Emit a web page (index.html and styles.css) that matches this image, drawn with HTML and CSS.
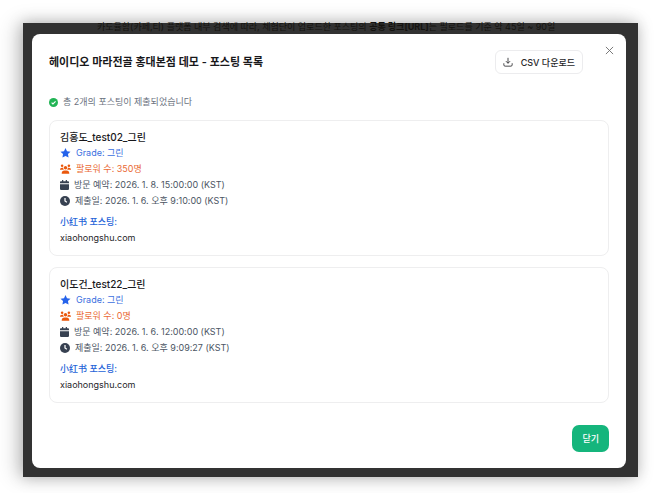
FILE: index.html
```html
<!DOCTYPE html>
<html lang="ko">
<head>
    <meta charset="UTF-8">
    <meta name="viewport" content="width=device-width, initial-scale=1.0">
    <title>포스팅 목록</title>
    <link rel="stylesheet" href="styles.css">
</head>
<body>
    <!-- Shared icons -->
    <svg class="icon-defs" aria-hidden="true">
        <symbol id="icon-star" viewBox="0 0 24 24">
            <path d="M12 0l3.600 7.600 8.400 1.200-6.100 5.800 1.500 8.400L12 19l-7.400 4 1.500-8.400L0 8.800l8.400-1.200z"/>
        </symbol>
        <symbol id="icon-users" viewBox="0 0 26 22">
            <circle cx="5" cy="3.500" r="3"/>
            <circle cx="21" cy="3.500" r="3"/>
            <circle cx="13" cy="8" r="4"/>
            <path d="M0 13c0-3 2-5 5-5h2.500c0 2 .5 3 1.500 5zM26 13c0-3-2-5-5-5h-2.500c0 2-.5 3-1.500 5zM4 22c0-4.500 2.500-7.500 6.500-7.500h5c4 0 6.500 3 6.500 7.500z"/>
        </symbol>
        <symbol id="icon-calendar" viewBox="0 0 22 24">
            <path d="M5 0h3v3h6V0h3v3h3a2 2 0 0 1 2 2v3H0V5a2 2 0 0 1 2-2h3zM0 10h22v12a2 2 0 0 1-2 2H2a2 2 0 0 1-2-2z"/>
        </symbol>
        <symbol id="icon-clock" viewBox="0 0 24 24">
            <circle cx="12" cy="12" r="12"/>
            <path class="icon-line" d="M12 5v7l4.500 3"/>
        </symbol>
    </svg>

    <div class="screen">
        <p class="backdrop-text">카도율함(카페,티) 플랫폼 내부 검색에 따라, 체험단이 업로드한 포스팅의 <b>공통 링크[URL]</b>는 필로드를 기준 약 45일 ~ 90일</p>

        <!-- Posting list modal -->
        <div class="modal" role="dialog" aria-labelledby="modalTitle">
            <button class="close" type="button" aria-label="닫기">
                <svg viewBox="0 0 10 10"><path d="M1 1l8 8M9 1L1 9"/></svg>
            </button>

            <header class="modal-header">
                <h1 id="modalTitle">헤이디오 마라전골 홍대본점 데모 - 포스팅 목록</h1>
                <button class="csv-button" type="button">
                    <svg viewBox="0 0 12 12"><path d="M6 1v6.500M3.500 5L6 7.500 8.500 5M1 7.500v2A1.500 1.500 0 0 0 2.500 11h7A1.500 1.500 0 0 0 11 9.500v-2"/></svg>
                    CSV 다운로드
                </button>
            </header>

            <p class="summary">
                <svg viewBox="0 0 24 24"><circle cx="12" cy="12" r="12"/><path d="M7 12.500l3.500 3.500L17.500 9"/></svg>
                총 2개의 포스팅이 제출되었습니다
            </p>

            <article class="card">
                <h2>김홍도_test02_그린</h2>
                <p class="row grade"><svg class="icon-wide"><use href="#icon-star"/></svg>Grade: 그린</p>
                <p class="row followers"><svg class="icon-wide"><use href="#icon-users"/></svg>팔로워 수: 350명</p>
                <p class="row"><svg class="icon-narrow"><use href="#icon-calendar"/></svg>방문 예약: 2026. 1. 8. 15:00:00 (KST)</p>
                <p class="row"><svg><use href="#icon-clock"/></svg>제출일: 2026. 1. 6. 오후 9:10:00 (KST)</p>
                <h3>小红书 포스팅:</h3>
                <a href="#">xiaohongshu.com</a>
            </article>

            <article class="card">
                <h2>이도건_test22_그린</h2>
                <p class="row grade"><svg class="icon-wide"><use href="#icon-star"/></svg>Grade: 그린</p>
                <p class="row followers"><svg class="icon-wide"><use href="#icon-users"/></svg>팔로워 수: 0명</p>
                <p class="row"><svg class="icon-narrow"><use href="#icon-calendar"/></svg>방문 예약: 2026. 1. 6. 12:00:00 (KST)</p>
                <p class="row"><svg><use href="#icon-clock"/></svg>제출일: 2026. 1. 6. 오후 9:09:27 (KST)</p>
                <h3>小红书 포스팅:</h3>
                <a href="#">xiaohongshu.com</a>
            </article>

            <footer class="modal-footer">
                <button class="done-button" type="button">닫기</button>
            </footer>
        </div>
    </div>
</body>
</html>
```

FILE: styles.css
```css
* {
    box-sizing: border-box;
}

body {
    margin: 0;
    padding: 23px 20px 16px 23px;
    background-color: #fff;
    font-family: Inter, "Noto Sans CJK KR", sans-serif;
    font-size: 9px;
    color: #4b5563;
    overflow-x: hidden;
}

h1, h2, h3, p {
    margin: 0;
}

button {
    font: inherit;
    cursor: pointer;
}

.icon-defs {
    display: none;
}

/* Dimmed page behind the modal */
.screen {
    position: relative;
    padding: 11px 12px 9px 9px;
    background-color: #323232;
    box-shadow: -8px 0 20px rgba(0, 0, 0, 0.14), 0 0 14px rgba(0, 0, 0, 0.25);
}

.backdrop-text {
    position: absolute;
    top: 0;
    left: 74px;
    line-height: 7px;
    white-space: nowrap;
    color: #14120f;
}

/* Modal */
.modal {
    position: relative;
    padding: 16px 17px;
    border-radius: 8px;
    background-color: #fff;
}

.close {
    position: absolute;
    top: 11px;
    right: 11px;
    padding: 1px;
    border: none;
    background: none;
    line-height: 0;
}

.close svg {
    width: 9px;
    height: 9px;
    fill: none;
    stroke: #6b6b6b;
}

.modal-header {
    display: flex;
    justify-content: space-between;
    align-items: center;
    padding-right: 26px;
}

.modal-header h1 {
    font-size: 11px;
    line-height: 16px;
    font-weight: 600;
    color: #18181b;
}

.csv-button {
    display: flex;
    align-items: center;
    gap: 8px;
    height: 24px;
    padding: 0 7px;
    border: 1px solid #ececee;
    border-radius: 6px;
    background-color: #fff;
    color: #27272a;
    font-weight: 500;
}

.csv-button svg {
    width: 10px;
    height: 10px;
    fill: none;
    stroke: currentColor;
}

.summary {
    display: flex;
    align-items: center;
    gap: 5px;
    margin: 20px 0 10px;
    line-height: 16px;
    color: #6b7280;
}

.summary svg {
    width: 9px;
    height: 9px;
}

.summary circle {
    fill: #22b455;
}

.summary path {
    fill: none;
    stroke: #fff;
    stroke-width: 3;
}

/* Posting cards */
.card {
    padding: 8px 10px 9px;
    border: 1px solid #eeeeef;
    border-radius: 8px;
    line-height: 16px;
}

.card + .card {
    margin-top: 11px;
}

.card h2 {
    font-size: 10px;
    font-weight: 500;
    color: #18181b;
}

.row {
    display: flex;
    align-items: center;
    gap: 5px;
}

.row svg {
    width: 10px;
    height: 10px;
    fill: #374151;
}

.row .icon-wide {
    width: 11px;
}

.row .icon-narrow {
    width: 9px;
}

.icon-line {
    fill: none;
    stroke: #fff;
    stroke-width: 3;
}

.grade {
    color: #3b6fe0;
}

.grade svg {
    fill: #2563eb;
}

.followers {
    color: #ea6a35;
}

.followers svg {
    fill: #ea580c;
}

.card h3 {
    margin-top: 5px;
    font-size: 9px;
    font-weight: 500;
    color: #2563d8;
}

.card a {
    display: block;
    color: #27272a;
    text-decoration: none;
}

/* Footer */
.modal-footer {
    display: flex;
    justify-content: flex-end;
    margin-top: 22px;
}

.done-button {
    height: 27px;
    padding: 0 10px;
    border: none;
    border-radius: 7px;
    background-color: #15b57c;
    color: #fff;
    font-weight: 500;
}
```
